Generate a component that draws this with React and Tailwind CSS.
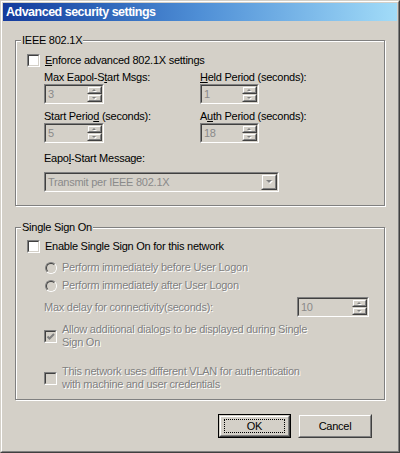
const Sunken = ({ className = '', inner = 'bg-[#d4d0c8]', children }) => (
  <div className={`border border-t-[#808080] border-l-[#808080] border-b-white border-r-white ${className}`}>
    <div className={`h-full w-full border border-t-[#404040] border-l-[#404040] border-b-[#d4d0c8] border-r-[#d4d0c8] ${inner}`}>
      {children}
    </div>
  </div>
)

const Raised = ({ className = '', children }) => (
  <div className={`border border-t-[#d4d0c8] border-l-[#d4d0c8] border-b-[#404040] border-r-[#404040] ${className}`}>
    <div className="h-full w-full border border-t-white border-l-white border-b-[#808080] border-r-[#808080] bg-[#d4d0c8] flex items-center justify-center">
      {children}
    </div>
  </div>
)

const Arrow = ({ up = false, w = 5, h = 3 }) => (
  <svg width={w + 1} height={h + 1} viewBox={`0 0 ${w + 1} ${h + 1}`}>
    {up ? (
      <>
        <polygon points={`1,${h + 1} ${w + 1},${h + 1} ${(w + 2) / 2},1`} fill="#fff" />
        <polygon points={`0,${h} ${w},${h} ${w / 2},0`} fill="#808080" />
      </>
    ) : (
      <>
        <polygon points={`1,1 ${w + 1},1 ${(w + 2) / 2},${h + 1}`} fill="#fff" />
        <polygon points={`0,0 ${w},0 ${w / 2},${h}`} fill="#808080" />
      </>
    )}
  </svg>
)

const Checkbox = ({ checked = false, disabled = false }) => (
  <Sunken className="w-[13px] h-[13px] shrink-0" inner={disabled ? 'bg-[#d4d0c8]' : 'bg-white'}>
    {checked && (
      <svg width="11" height="11" viewBox="0 0 11 11">
        <polyline points="1.5,4.5 3.5,6.5 8,2" fill="none" stroke="#808080" strokeWidth="2" />
      </svg>
    )}
  </Sunken>
)

const Radio = () => (
  <div className="w-[12px] h-[12px] shrink-0 rounded-full border border-t-[#808080] border-l-[#808080] border-b-white border-r-white">
    <div className="h-full w-full rounded-full border border-t-[#404040] border-l-[#404040] border-b-[#d4d0c8] border-r-[#d4d0c8] bg-[#d4d0c8]" />
  </div>
)

const Spinner = ({ value, width = 'w-[60px]' }) => (
  <Sunken className={`${width} h-[20px]`}>
    <div className="flex h-full">
      <span className="flex-1 pl-[2px] leading-[16px] text-[#8a8a8a]">{value}</span>
      <div className="flex w-[15px] flex-col">
        <Raised className="h-[8px]">
          <Arrow up w={4} h={2} />
        </Raised>
        <Raised className="h-[8px]">
          <Arrow w={4} h={2} />
        </Raised>
      </div>
    </div>
  </Sunken>
)

const Group = ({ title, className = '', children }) => (
  <div className={`relative border border-[#808080] shadow-[inset_1px_1px_0_#fff,1px_1px_0_#fff] ${className}`}>
    <span className="absolute left-[5px] -top-[7px] bg-[#d4d0c8] px-[1px] leading-[13px]">{title}</span>
    {children}
  </div>
)

const dim = 'text-[#808080] [text-shadow:1px_1px_0_#fff]'

export default function App() {
  return (
    <div className="w-[400px] h-[453px] bg-[#d4d0c8] border border-t-[#d4d0c8] border-l-[#d4d0c8] border-b-[#404040] border-r-[#404040] font-['Liberation_Sans',Arial,sans-serif] text-[11px] tracking-[-0.25px] leading-[13px] text-black">
      <div className="h-full border border-t-white border-l-white border-b-[#808080] border-r-[#808080] p-[1px]">
        <div className="flex h-[18px] items-center bg-gradient-to-r from-[#143a9c] via-[#4f8fd6] to-[#a2dcf8] pl-[3px]">
          <span className="text-[12.5px] font-bold tracking-[-0.5px] text-white">Advanced security settings</span>
        </div>

        <div className="px-[12px] pt-[19px]">
          <Group title="IEEE 802.1X" className="h-[166px]">
            <div className="pl-[11px] pt-[13px]">
              <div className="flex h-[13px] items-center gap-[5px]">
                <Checkbox />
                <span>
                  <u>E</u>nforce advanced 802.1X settings
                </span>
              </div>
              <div className="mt-[4px] pl-[17px]">
                <div className="grid grid-cols-[156px_1fr] gap-y-[6px]">
                  <div>
                    <div>
                      Max Eapol-S<u>t</u>art Msgs:
                    </div>
                    <Spinner value="3" width="w-[60px]" />
                  </div>
                  <div>
                    <div>
                      <u>H</u>eld Period (seconds):
                    </div>
                    <Spinner value="1" width="w-[59px]" />
                  </div>
                  <div>
                    <div>
                      Start Perio<u>d</u> (seconds):
                    </div>
                    <Spinner value="5" width="w-[60px]" />
                  </div>
                  <div>
                    <div>
                      A<u>u</u>th Period (seconds):
                    </div>
                    <Spinner value="18" width="w-[59px]" />
                  </div>
                </div>
                <div className="mt-[9px]">
                  Eapo<u>l</u>-Start Message:
                </div>
                <Sunken className="mt-[7px] h-[20px] w-[235px]">
                  <div className="flex h-full items-center">
                    <span className="flex-1 pl-[2px] text-[#8a8a8a]">Transmit per IEEE 802.1X</span>
                    <Raised className="h-[16px] w-[16px]">
                      <Arrow w={6} h={3} />
                    </Raised>
                  </div>
                </Sunken>
              </div>
            </div>
          </Group>

          <Group title="Single Sign On" className="mt-[21px] h-[173px]">
            <div className="pl-[11px] pt-[12px]">
              <div className="flex h-[13px] items-center gap-[5px]">
                <Checkbox />
                <span>Enable Single Sign On for this network</span>
              </div>
              <div className="mt-[8px] flex h-[13px] items-center gap-[5px] pl-[18px]">
                <Radio />
                <span className={dim}>Perform immediately before User Logon</span>
              </div>
              <div className="mt-[5px] flex h-[13px] items-center gap-[5px] pl-[18px]">
                <Radio />
                <span className={dim}>Perform immediately after User Logon</span>
              </div>
              <div className="mt-[5px] flex h-[20px] items-center justify-between pl-[17px] pr-[15px]">
                <span className={dim}>Max delay for connectivity(seconds):</span>
                <Spinner value="10" width="w-[72px]" />
              </div>
              <div className="mt-[6px] flex items-center gap-[5px] pl-[17px]">
                <Checkbox checked disabled />
                <span className={dim}>
                  Allow additional dialogs to be displayed during Single
                  <br />
                  Sign On
                </span>
              </div>
              <div className="mt-[16px] flex items-center gap-[5px] pl-[17px]">
                <Checkbox disabled />
                <span className={dim}>
                  This network uses different VLAN for authentication
                  <br />
                  with machine and user credentials
                </span>
              </div>
            </div>
          </Group>

          <div className="mt-[14px] flex justify-end gap-[7px] pr-[13px]">
            <div className="h-[24px] w-[73px] border border-black">
              <Raised className="h-full w-full">
                <div className="flex h-[14px] w-[61px] items-center justify-center border border-dotted border-black">OK</div>
              </Raised>
            </div>
            <Raised className="h-[24px] w-[74px]">Cancel</Raised>
          </div>
        </div>
      </div>
    </div>
  )
}
